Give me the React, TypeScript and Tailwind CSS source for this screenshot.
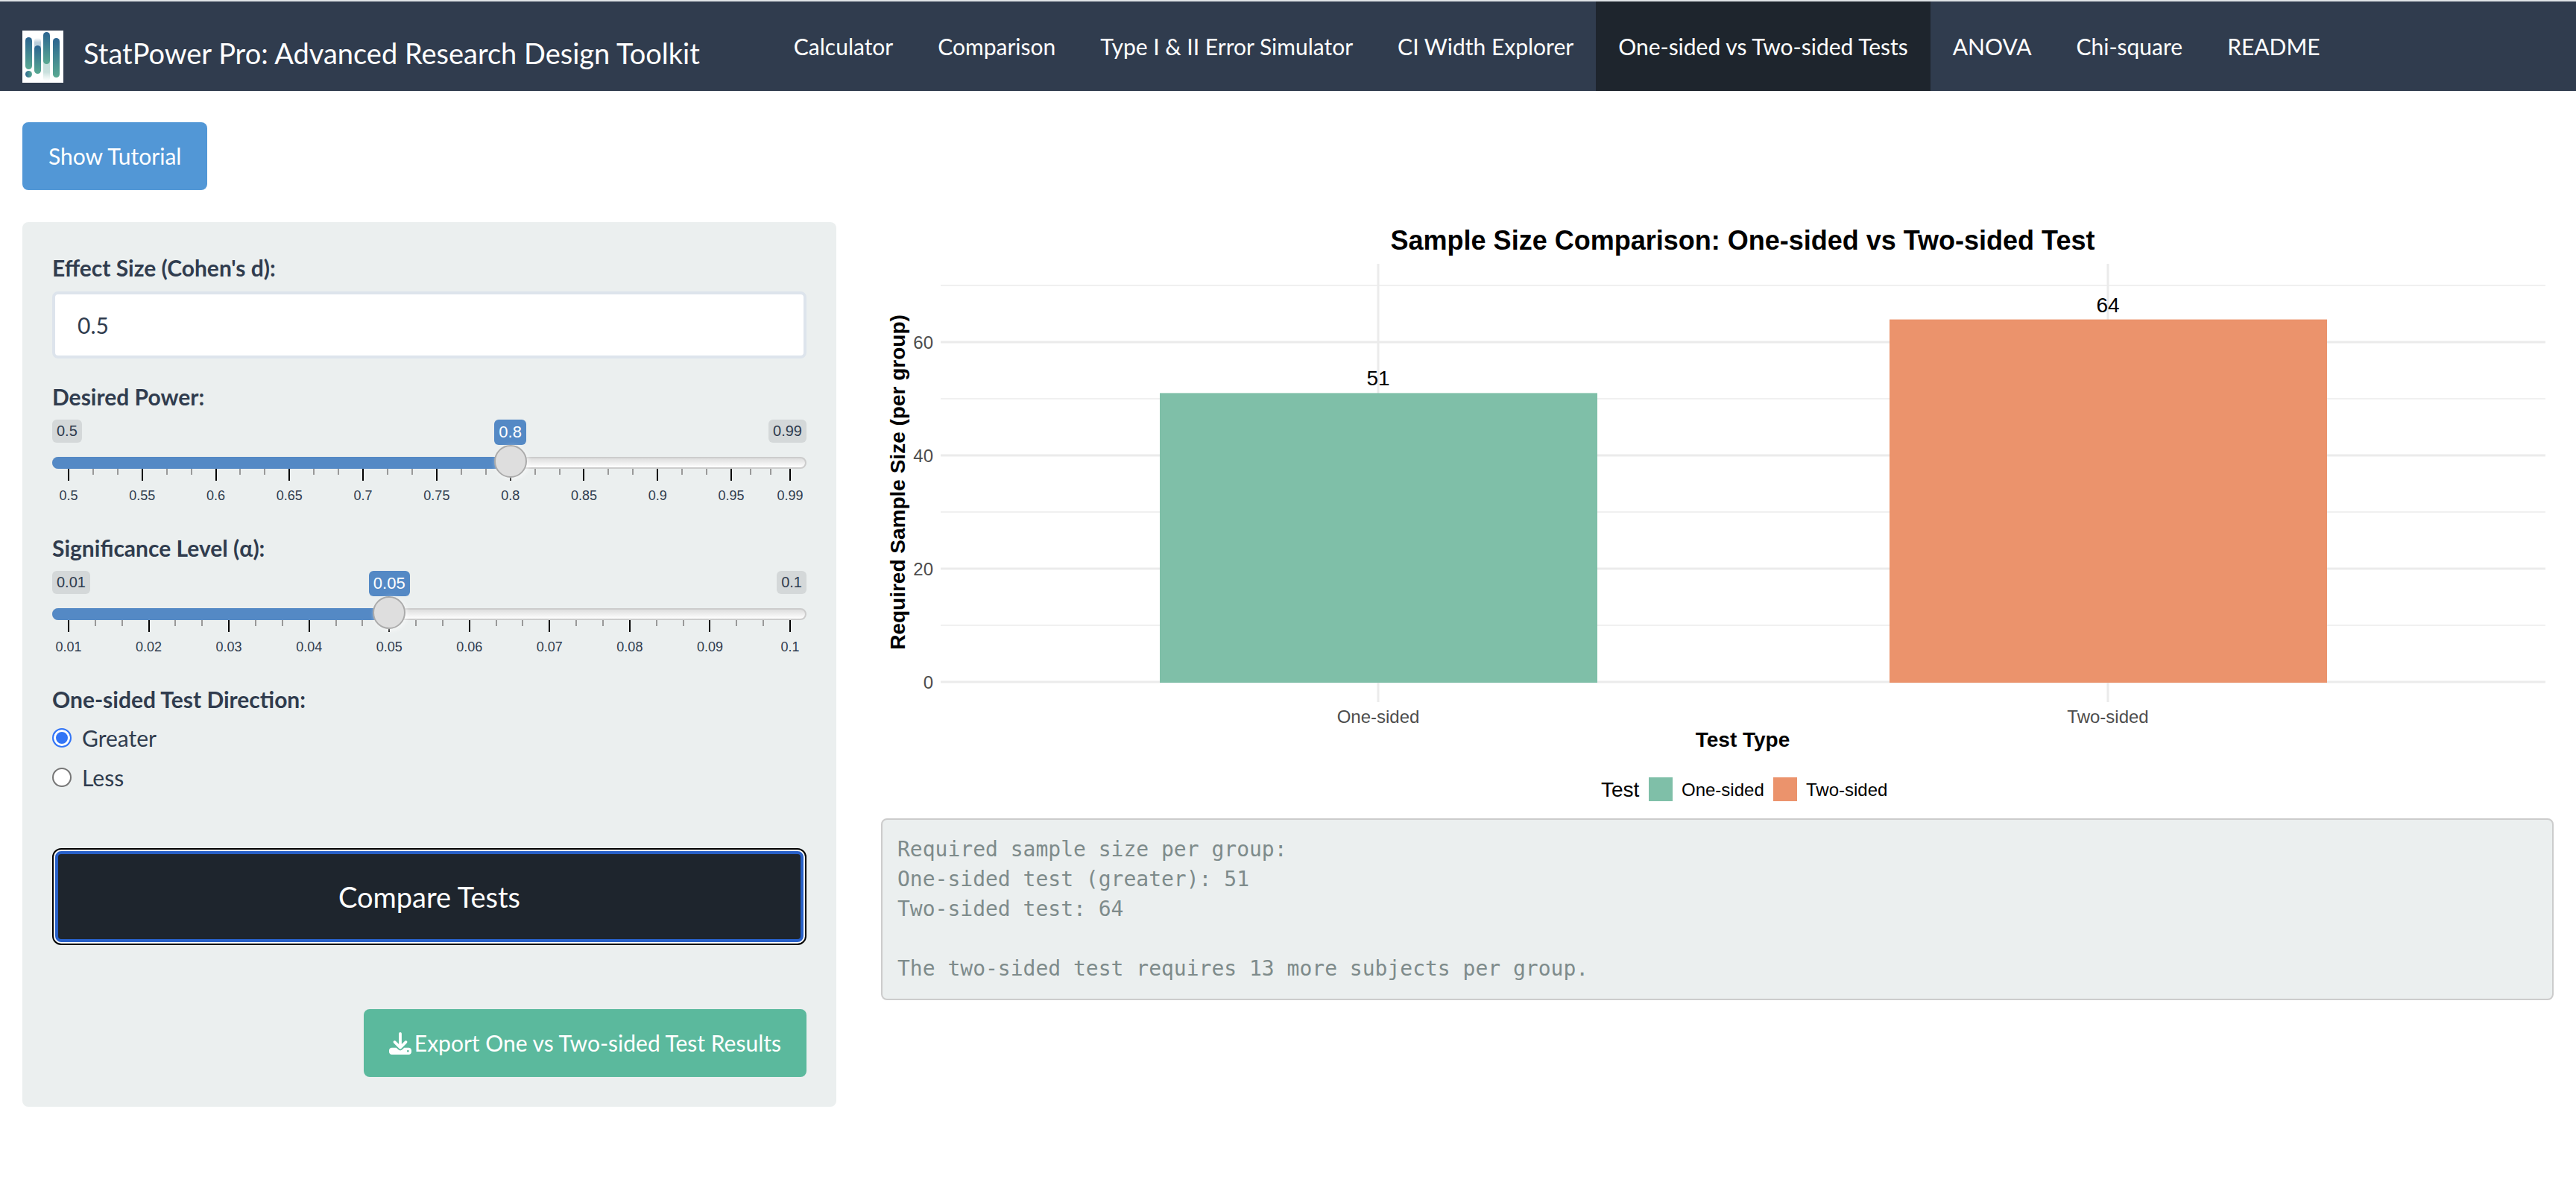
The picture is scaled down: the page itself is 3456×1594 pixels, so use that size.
import React, { useState } from "react";
import { FaDownload } from "react-icons/fa6";

const tabs = [
  "Calculator",
  "Comparison",
  "Type I & II Error Simulator",
  "CI Width Explorer",
  "One-sided vs Two-sided Tests",
  "ANOVA",
  "Chi-square",
  "README",
];

function Logo() {
  return (
    <svg viewBox="0 0 55 70" className="h-[70px] w-[55px] shrink-0" aria-hidden="true">
      <defs>
        <linearGradient id="bar" x1="0" y1="0" x2="0" y2="1">
          <stop offset="0" stopColor="#2b6490" />
          <stop offset="1" stopColor="#5aa992" />
        </linearGradient>
        <linearGradient id="dot" x1="0" y1="0" x2="1" y2="0">
          <stop offset="0" stopColor="#2f6a90" />
          <stop offset="1" stopColor="#5aa992" />
        </linearGradient>
        <linearGradient id="fadeUp" x1="0" y1="0" x2="0" y2="1">
          <stop offset="0" stopColor="#b9cdda" stopOpacity="0" />
          <stop offset="0.3" stopColor="#b9cdda" />
          <stop offset="1" stopColor="#b9cdda" />
        </linearGradient>
        <linearGradient id="fadeDown" x1="0" y1="0" x2="0" y2="1">
          <stop offset="0" stopColor="#c3ddd9" />
          <stop offset="0.6" stopColor="#c9e0dd" />
          <stop offset="1" stopColor="#d5e8e4" stopOpacity="0" />
        </linearGradient>
      </defs>
      <rect width="55" height="70" fill="#fff" />
      <rect x="16" y="10" width="9" height="20" rx="4" fill="url(#fadeUp)" />
      <rect x="28" y="38" width="9" height="30" rx="4" fill="url(#fadeDown)" />
      <rect x="4" y="9" width="9" height="43" rx="4.5" fill="url(#bar)" />
      <circle cx="8.5" cy="58.5" r="4.5" fill="url(#dot)" />
      <rect x="16" y="20" width="9" height="38" rx="4.5" fill="url(#bar)" />
      <rect x="28" y="2" width="9" height="43" rx="4.5" fill="url(#bar)" />
      <rect x="41" y="10" width="9" height="53" rx="4.5" fill="url(#bar)" />
    </svg>
  );
}

type SliderProps = {
  id: string;
  label: string;
  min: number;
  max: number;
  step: number;
  initial: number;
  majors: number[];
};

function Slider({ id, label, min, max, step, initial, majors }: SliderProps) {
  const [value, setValue] = useState(initial);
  const pct = (v: number) => `${((v - min) / (max - min)) * 100}%`;
  const minors = majors
    .slice(1)
    .flatMap((m, i) => [1, 2].map((k) => majors[i] + ((m - majors[i]) * k) / 3));
  return (
    <div>
      <label htmlFor={id} className="block font-bold leading-10">
        {label}
      </label>
      <div className="relative mt-[11px] h-[136px] font-['Liberation_Sans',sans-serif]">
        <div className="flex justify-between text-[20px] leading-[31px]">
          <span className="rounded-md bg-[#d4d8d9] px-1.5">{min}</span>
          <span className="rounded-md bg-[#d4d8d9] px-1.5">{max}</span>
        </div>
        <div className="absolute inset-x-0 top-[50px] h-4 rounded-lg border-2 border-[#cccccc] bg-linear-to-b from-[#dedede] to-white" />
        <div className="absolute inset-x-[22px] top-0">
          <div
            className="absolute -left-[22px] top-[50px] h-4 rounded-l-lg bg-[#5489c5]"
            style={{ width: `calc(${pct(value)} + 22px)` }}
          />
          {minors.map((m) => (
            <i key={m} className="absolute top-[66px] h-2 w-0.5 -translate-x-px bg-[#999999]" style={{ left: pct(m) }} />
          ))}
          {majors.map((m) => (
            <div key={m} className="absolute top-[66px] flex w-0 flex-col items-center" style={{ left: pct(m) }}>
              <i className="h-4 w-0.5 bg-black" />
              <span className="mt-2 text-[18px] leading-6">{m}</span>
            </div>
          ))}
          <div className="absolute top-0 flex w-0 flex-col items-center" style={{ left: pct(value) }}>
            <span className="rounded-md bg-[#5489c5] px-1.5 text-[22px] leading-[34px] text-white">{value}</span>
            <i className="size-11 shrink-0 rounded-full border-2 border-[#ababab] bg-[#dedede] shadow-[2px_2px_6px_rgba(255,255,255,0.6)]" />
          </div>
        </div>
        <input
          id={id}
          type="range"
          min={min}
          max={max}
          step={step}
          value={value}
          onChange={(e) => setValue(Number(e.target.value))}
          className="absolute inset-x-0 top-[34px] h-11 w-full cursor-pointer opacity-0"
        />
      </div>
    </div>
  );
}

function Radio({ label, defaultChecked }: { label: string; defaultChecked?: boolean }) {
  return (
    <label className="flex items-center gap-3.5 leading-10">
      <input
        type="radio"
        name="direction"
        defaultChecked={defaultChecked}
        className="size-[26px] appearance-none rounded-full border-2 border-[#767676] bg-white checked:border-[#3375f6] checked:bg-[#3375f6] checked:shadow-[inset_0_0_0_3px_#fff]"
      />
      {label}
    </label>
  );
}

const y = (v: number) => 617 - v * 7.6;

const bars = [
  { name: "One-sided", value: 51, x: 374, fill: "#7fbfa8" },
  { name: "Two-sided", value: 64, x: 1353, fill: "#eb936c" },
];

function Chart() {
  return (
    <svg
      viewBox="0 0 2244 800"
      className="block h-auto w-full font-['Liberation_Sans',sans-serif]"
      role="img"
      aria-label="Sample Size Comparison: One-sided vs Two-sided Test"
    >
      <text x="1156" y="37" textAnchor="middle" fontSize="36" fontWeight="700">
        Sample Size Comparison: One-sided vs Two-sided Test
      </text>
      {[10, 30, 50, 70].map((v) => (
        <line key={v} x1="80" x2="2233" y1={y(v)} y2={y(v)} stroke="#ebebeb" strokeWidth="1.5" />
      ))}
      {[0, 20, 40, 60].map((v) => (
        <g key={v}>
          <line x1="80" x2="2233" y1={y(v)} y2={y(v)} stroke="#ebebeb" strokeWidth="3" />
          <text x="70" y={y(v) + 9} textAnchor="end" fontSize="24" fill="#4d4d4d">
            {v}
          </text>
        </g>
      ))}
      {bars.map((b) => (
        <g key={b.name}>
          <line x1={b.x + 293} x2={b.x + 293} y1="56" y2="644" stroke="#ebebeb" strokeWidth="3" />
          <rect x={b.x} y={y(b.value)} width="587" height={y(0) - y(b.value) + 1} fill={b.fill} />
          <text x={b.x + 293} y={y(b.value) - 10} textAnchor="middle" fontSize="28">
            {b.value}
          </text>
          <text x={b.x + 293} y="672" textAnchor="middle" fontSize="24" fill="#4d4d4d">
            {b.name}
          </text>
        </g>
      ))}
      <text x="1156" y="704" textAnchor="middle" fontSize="28" fontWeight="700">
        Test Type
      </text>
      <text transform="translate(32 349) rotate(-90)" textAnchor="middle" fontSize="28" fontWeight="700">
        Required Sample Size (per group)
      </text>
      <text x="966" y="771" fontSize="28">
        Test
      </text>
      <rect x="1030" y="745" width="32" height="32" fill="#7fbfa8" />
      <text x="1074" y="770" fontSize="24">
        One-sided
      </text>
      <rect x="1197" y="745" width="32" height="32" fill="#eb936c" />
      <text x="1241" y="770" fontSize="24">
        Two-sided
      </text>
    </svg>
  );
}

const output = `Required sample size per group:
One-sided test (greater): 51
Two-sided test: 64

The two-sided test requires 13 more subjects per group.`;

export default function App() {
  return (
    <div className="min-h-screen bg-white font-['Lato',sans-serif] text-[30px] text-[#303c4e]">
      <header className="flex h-[122px] border-t-2 border-[#dfe3e6] bg-[#303c4e] text-white">
        <a href="#" className="flex items-center gap-[27px] pl-[30px] pt-[29px] pb-[1px] pr-24 text-[38px] leading-10">
          <Logo />
          <span className="-mt-2.5 whitespace-nowrap">StatPower Pro: Advanced Research Design Toolkit</span>
        </a>
        <nav className="flex">
          {tabs.map((t, i) => (
            <a
              key={t}
              href="#"
              className={
                i === 4
                  ? "whitespace-nowrap bg-[#1e252d] px-[30px] pt-[39px] leading-[42px]"
                  : "whitespace-nowrap px-[30px] pt-[39px] leading-[42px]"
              }
            >
              {t}
            </a>
          ))}
        </nav>
      </header>

      <main className="px-[30px] pt-[42px] pb-10">
        <button type="button" className="h-[91px] rounded-lg bg-[#5297d6] px-[35px] text-white">
          Show Tutorial
        </button>

        <div className="mt-[43px] flex items-start gap-[60px]">
          <form className="w-1/3 max-w-[1092px] shrink-0 rounded-lg bg-[#ebefef] px-10 pt-10 pb-10" onSubmit={(e) => e.preventDefault()}>
            <label htmlFor="effect" className="block font-bold leading-[43px]">
              Effect Size (Cohen's d):
            </label>
            <input
              id="effect"
              type="text"
              defaultValue="0.5"
              className="mt-2.5 mb-[31px] block h-[90px] w-full rounded-lg border-4 border-[#dde4ec] bg-white px-[30px]"
            />
            <Slider
              id="power"
              label="Desired Power:"
              min={0.5}
              max={0.99}
              step={0.01}
              initial={0.8}
              majors={[0.5, 0.55, 0.6, 0.65, 0.7, 0.75, 0.8, 0.85, 0.9, 0.95, 0.99]}
            />
            <div className="mt-4">
              <Slider
                id="alpha"
                label="Significance Level (α):"
                min={0.01}
                max={0.1}
                step={0.01}
                initial={0.05}
                majors={[0.01, 0.02, 0.03, 0.04, 0.05, 0.06, 0.07, 0.08, 0.09, 0.1]}
              />
            </div>
            <fieldset className="mt-4">
              <legend className="font-bold leading-10">One-sided Test Direction:</legend>
              <div className="mt-3 flex flex-col gap-[13px]">
                <Radio label="Greater" defaultChecked />
                <Radio label="Less" />
              </div>
            </fieldset>
            <button
              type="submit"
              className="mt-[75px] block h-[130px] w-full rounded-xl border-2 border-black bg-white p-0.5 text-[38px] text-white"
            >
              <span className="flex h-full items-center justify-center rounded-lg border-4 border-[#2860c8] bg-[#1e252d]">Compare Tests</span>
            </button>
            <div className="mt-[86px] flex justify-end">
              <button type="button" className="flex h-[91px] items-center gap-1 rounded-lg bg-[#5bb99d] px-[34px] text-white">
                <FaDownload className="size-[30px]" />
                Export One vs Two-sided Test Results
              </button>
            </div>
          </form>

          <section className="min-w-0 flex-1">
            <Chart />
            <pre className="rounded-lg border-2 border-[#cccccc] bg-[#ebefef] p-5 font-['DejaVu_Sans_Mono',monospace] text-[28px] leading-10 text-[#7e8b8b]">
              {output}
            </pre>
          </section>
        </div>
      </main>
    </div>
  );
}
